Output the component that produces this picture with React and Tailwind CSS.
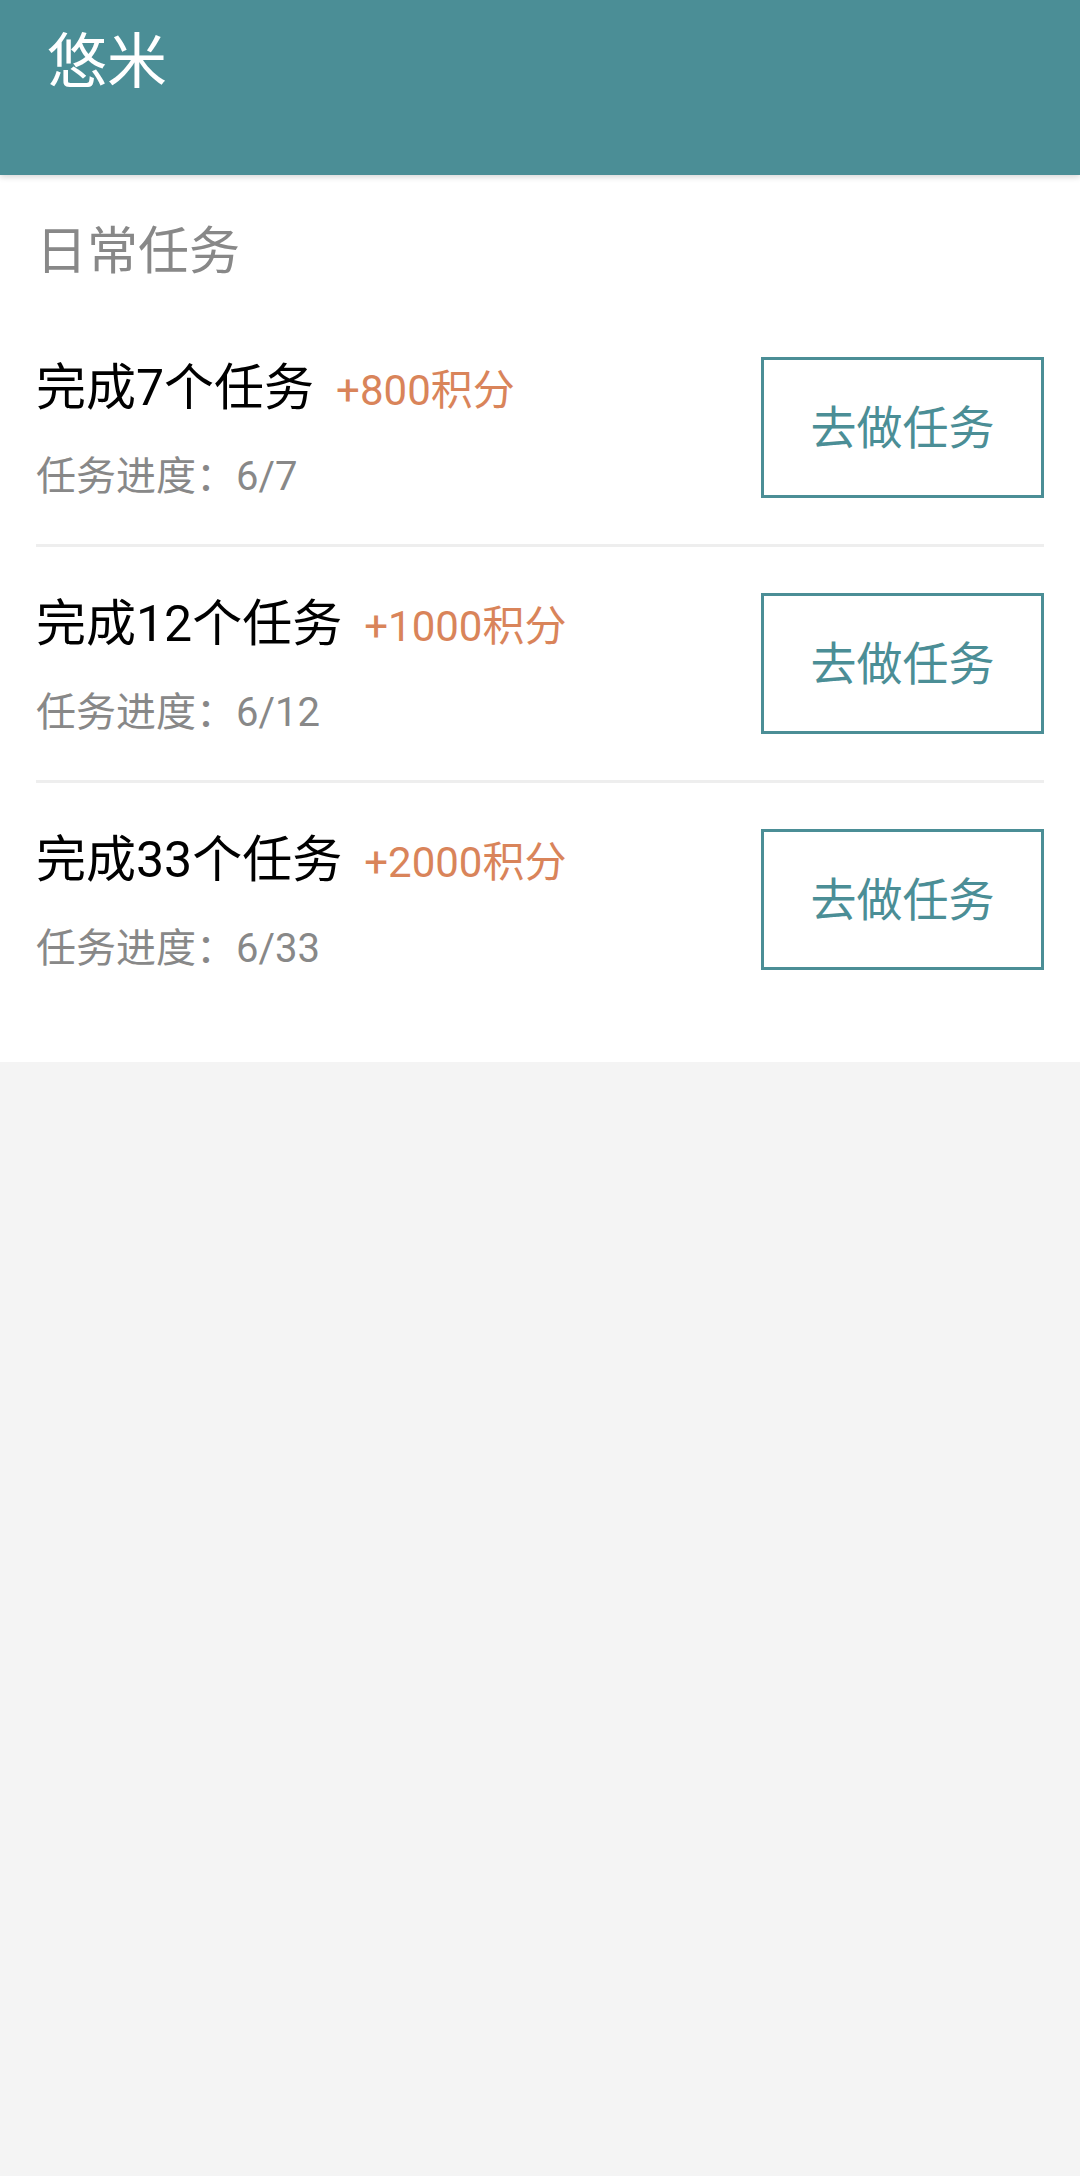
import React from "react";

const tasks = [
  { title: "完成7个任务", points: "+800积分", progress: "6/7" },
  { title: "完成12个任务", points: "+1000积分", progress: "6/12" },
  { title: "完成33个任务", points: "+2000积分", progress: "6/33" },
];

export default function App() {
  return (
    <div
      className="min-h-[2176px] w-[1080px] bg-[#f4f4f4]"
      style={{ fontFamily: 'Roboto, "Noto Sans CJK SC", sans-serif' }}
    >
      <header className="relative z-10 h-[175px] bg-[#4b8e96] pl-[47px] pt-[33px] shadow-[0_2px_6px_rgba(0,0,0,0.16)]">
        <h1 className="text-[60px] leading-[60px] text-white">悠米</h1>
      </header>
      <section className="bg-white px-[36px] pb-[46px]">
        <h2 className="pt-[51px] pb-[34px] text-[51px] leading-[51px] text-[#888888]">日常任务</h2>
        {tasks.map((t, i) => (
          <div
            key={i}
            className={
              "flex items-center justify-between py-[46px] " +
              (i < tasks.length - 1 ? "border-b-[3px] border-[#eeeeee]" : "")
            }
          >
            <div className="flex flex-col pt-[4px]">
              <div className="flex items-baseline">
                <span className="text-[50px] leading-[50px] text-black">{t.title}</span>
                <span className="ml-[22px] text-[42px] leading-[50px] text-[#d9845a]">{t.points}</span>
              </div>
              <div className="mt-[41px] text-[40px] leading-[40px] text-[#888888]">
                任务进度：{t.progress}
              </div>
            </div>
            <button className="flex h-[141px] w-[283px] items-center justify-center border-[3px] border-[#4b8e96] bg-white text-[46px] leading-[46px] text-[#4b8e96]">
              去做任务
            </button>
          </div>
        ))}
      </section>
    </div>
  );
}
